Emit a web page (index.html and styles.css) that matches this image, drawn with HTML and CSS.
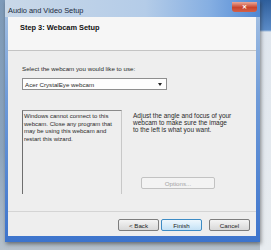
FILE: index.html
```html
<!DOCTYPE html>
<html lang="en">
<head>
    <meta charset="UTF-8">
    <title>Audio and Video Setup</title>
    <link rel="stylesheet" href="styles.css">
</head>
<body>
    <div class="desktop">
        <div class="window">
            <div class="titlebar">
                <span class="title">Audio and Video Setup</span>
                <span class="close">&#x2715;</span>
            </div>
            <div class="client">
                <div class="header">Step 3: Webcam Setup</div>
                <div class="main">
                    <div class="label">Select the webcam you would like to use:</div>
                    <div class="select">
                        <span>Acer CrystalEye webcam</span>
                        <span class="arrow"></span>
                    </div>
                    <div class="row">
                        <div class="preview">Windows cannot connect to this<br>webcam. Close any program that<br>may be using this webcam and<br>restart this wizard.</div>
                        <div class="side">
                            <div class="hint">Adjust the angle and focus of your<br>webcam to make sure the image<br>to the left is what you want.</div>
                            <button class="btn options" disabled>Options...</button>
                        </div>
                    </div>
                </div>
                <div class="footer">
                    <button class="btn">&lt; Back</button>
                    <button class="btn default">Finish</button>
                    <button class="btn cancel">Cancel</button>
                </div>
            </div>
        </div>
    </div>
</body>
</html>
```

FILE: styles.css
```css
html, body {
    margin: 0;
    padding: 0;
}
body {
    width: 271px;
    height: 250px;
    overflow: hidden;
    font-family: "Liberation Sans", Arial, sans-serif;
    font-size: 6.2px;
    color: #2a2a2a;
}
.desktop {
    height: 250px;
    padding-left: 5px;
    display: flex;
    background:
        linear-gradient(to bottom, #2f5f9c 0, #5b8cc8 30px, #dfe6ee 32px, #e8ecf0 100%) right / 11px 100% no-repeat,
        linear-gradient(to bottom, #7e9bb9, #8ea5bd 60%, #b7c2cc);
}
.window {
    width: 255px;
    height: 242px;
    padding: 0 4px 6px 3px;
    box-sizing: border-box;
    display: flex;
    flex-direction: column;
    background: linear-gradient(to bottom, #a9c4e4 0, #6f9bd8 40%, #3d74cc 100%);
    box-shadow: 1px 2px 4px rgba(40, 40, 40, 0.55);
}
.titlebar {
    height: 17px;
    display: flex;
    align-items: flex-start;
    justify-content: space-between;
    background: linear-gradient(to right, #c9d8e8 0, #b4cce8 55%, #86afe2 80%, #4f88d4 100%);
    margin: 0 -4px 0 -3px;
    padding: 0 3px 0 3px;
}
.title {
    font-size: 7.4px;
    color: #1b2a3c;
    padding-top: 6px;
}
.close {
    width: 25px;
    height: 10px;
    margin-top: 2px;
    border-radius: 0 0 3px 3px;
    background: linear-gradient(to bottom, #e9a99a, #c9442c 55%, #d2614a);
    color: #fff;
    font-size: 6px;
    font-weight: bold;
    text-align: center;
    line-height: 10px;
}
.client {
    flex: 1;
    display: flex;
    flex-direction: column;
    background: #eeeeee;
}
.header {
    height: 34px;
    box-sizing: border-box;
    padding: 6px 0 0 12px;
    background: #f6f6f6;
    border-bottom: 1px solid #c4c4c4;
    font-size: 7.4px;
    font-weight: bold;
    color: #111;
}
.main {
    flex: 1;
    padding: 13px 0 0 14px;
    display: flex;
    flex-direction: column;
    align-items: flex-start;
}
.label {
    line-height: 9px;
}
.select {
    width: 145px;
    height: 12px;
    box-sizing: border-box;
    margin-top: 5px;
    padding: 0 4px 0 2px;
    display: flex;
    align-items: center;
    justify-content: space-between;
    background: #fdfdfd;
    border: 1px solid #8e8e8e;
}
.arrow {
    width: 0;
    height: 0;
    border-left: 2px solid transparent;
    border-right: 2px solid transparent;
    border-top: 3px solid #222;
}
.row {
    display: flex;
    margin-top: 20px;
    height: 79px;
}
.preview {
    width: 100px;
    height: 84px;
    box-sizing: border-box;
    padding: 2px 2px 0 1px;
    border-top: 1px solid #8a8a8a;
    border-left: 1px solid #6e6e6e;
    border-right: 1px solid #c8c8c8;
    font-size: 6px;
    line-height: 7.5px;
    background: #eeeeee;
}
.side {
    margin-left: 11px;
    display: flex;
    flex-direction: column;
    align-items: flex-start;
}
.hint {
    padding-top: 2px;
    font-size: 6.5px;
    line-height: 7px;
}
.btn {
    font-family: inherit;
    font-size: 6.2px;
    height: 12px;
    padding: 0;
    margin: 0;
    border: 1px solid #7d7d7d;
    border-radius: 2px;
    background: linear-gradient(to bottom, #f4f4f4, #e6e6e6 50%, #d8d8d8);
    color: #222;
}
.options {
    margin-top: auto;
    margin-left: 8px;
    width: 74px;
    border-color: #c2c2c2;
    background: #f3f3f3;
    color: #a4a4a4;
}
.footer {
    display: flex;
    justify-content: flex-end;
    gap: 2px;
    padding: 7px 6px 5px 0;
    border-top: 1px solid #d4d4d4;
}
.footer .btn {
    width: 41px;
}
.default {
    border-color: #3d8bc4;
    background: linear-gradient(to bottom, #eef7fd, #d9edfa 50%, #c4e1f5);
}
.cancel {
    margin-left: 5px;
}
```
